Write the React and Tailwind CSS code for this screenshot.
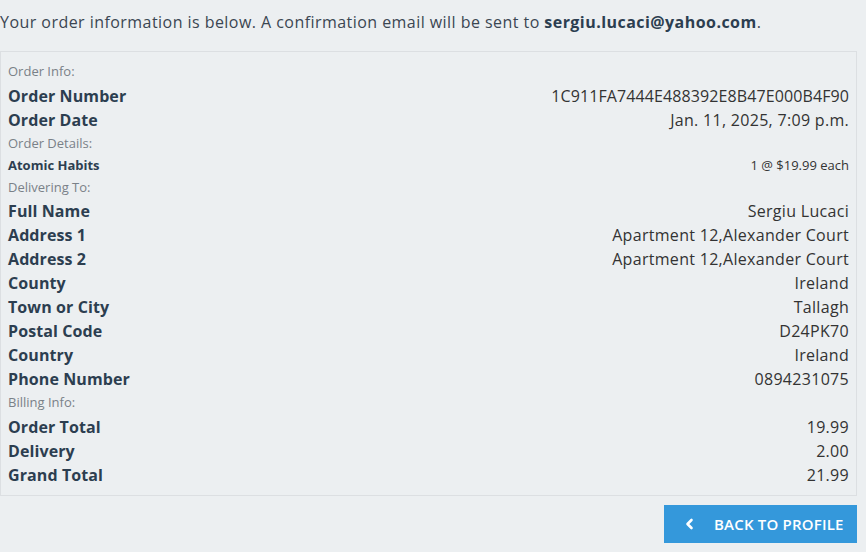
import React from "react";

const font = { fontFamily: '"Open Sans", "Noto Sans", sans-serif' };

function Section({ children }) {
  return (
    <div className="h-[24px] flex items-center text-[13px] text-[#7a8188]">
      {children}
    </div>
  );
}

function Row({ label, value, vt = "tracking-[0.3px]" }) {
  return (
    <div className="h-[24px] flex items-center justify-between">
      <span className="text-[16px] font-bold text-[#2c3e50] tracking-[0.1px]">{label}</span>
      <span className={`text-[16px] text-[#333] ${vt}`}>{value}</span>
    </div>
  );
}

export default function App() {
  const delivery = [
    ["Full Name", "Sergiu Lucaci"],
    ["Address 1", "Apartment 12,Alexander Court"],
    ["Address 2", "Apartment 12,Alexander Court"],
    ["County", "Ireland"],
    ["Town or City", "Tallagh"],
    ["Postal Code", "D24PK70"],
    ["Country", "Ireland"],
    ["Phone Number", "0894231075"],
  ];
  const billing = [
    ["Order Total", "19.99"],
    ["Delivery", "2.00"],
    ["Grand Total", "21.99"],
  ];
  return (
    <div className="w-[866px] h-[552px] bg-[#eceff1] overflow-hidden" style={font}>
      <div className="w-[857px]">
        <p className="h-[51px] pt-[10px] leading-[24px] text-[16px] text-[#3b4652] tracking-[0.45px] whitespace-nowrap">
          Your order information is below. A confirmation email will be sent to{" "}
          <span className="font-bold text-[#2c3e50]">sergiu.lucaci@yahoo.com</span>.
        </p>
        <div className="border border-[#dcdfe2] pl-[7px] pr-[7px] pt-[8px] pb-[8px]">
          <Section>Order Info:</Section>
          <Row label="Order Number" value="1C911FA7444E488392E8B47E000B4F90" vt="tracking-[0.1px]" />
          <Row label="Order Date" value="Jan. 11, 2025, 7:09 p.m." />
          <Section>Order Details:</Section>
          <div className="h-[20px] flex items-center justify-between text-[13px]">
            <span className="font-bold text-[#2c3e50]">Atomic Habits</span>
            <span className="text-[#333]">1 @ $19.99 each</span>
          </div>
          <div className="h-[23px] flex items-center text-[13px] text-[#7a8188]">
            Delivering To:
          </div>
          {delivery.map(([l, v]) => (
            <Row key={l} label={l} value={v} />
          ))}
          <Section>Billing Info:</Section>
          {billing.map(([l, v]) => (
            <Row key={l} label={l} value={v} />
          ))}
        </div>
        <div className="flex justify-end mt-[9px]">
          <button className="h-[38px] w-[193px] bg-[#3498db] text-white flex items-center pl-[21px] text-[15px] font-semibold uppercase tracking-[0.2px] whitespace-nowrap">
            <svg width="9" height="12" viewBox="0 0 9 12" className="mr-[20px]">
              <path d="M6.5 2 L2.5 6 L6.5 10" stroke="white" strokeWidth="2.6" fill="none" strokeLinecap="round" strokeLinejoin="round" />
            </svg>
            Back to Profile
          </button>
        </div>
      </div>
    </div>
  );
}
